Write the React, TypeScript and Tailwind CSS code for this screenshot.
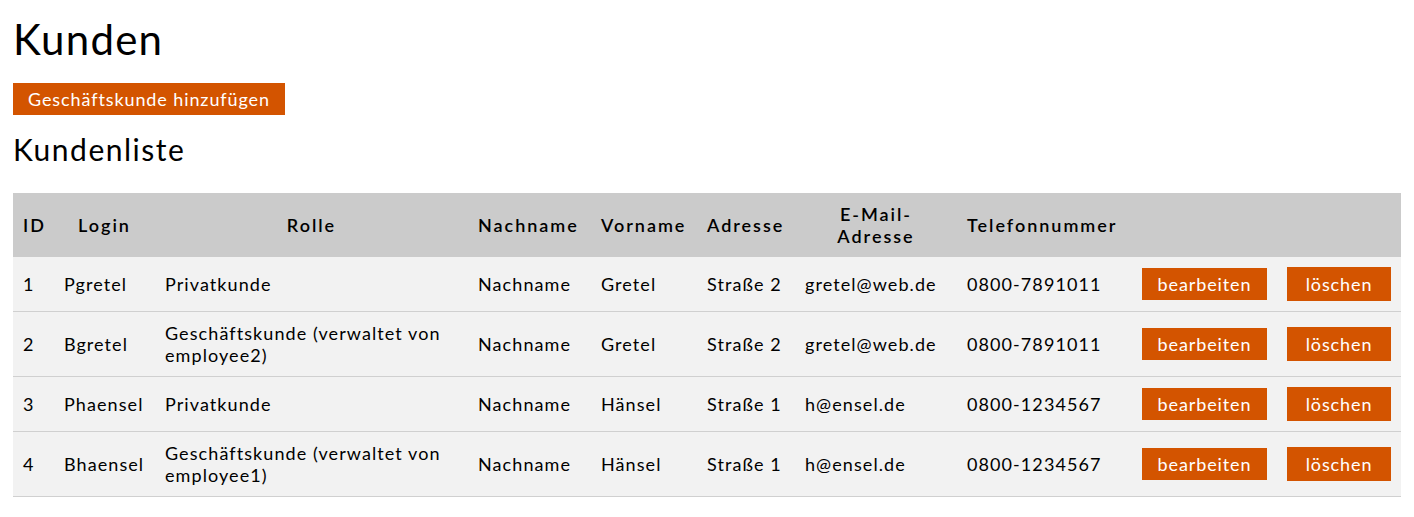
import React from "react";

const rows = [
  { id: "1", login: "Pgretel", rolle: "Privatkunde", nach: "Nachname", vor: "Gretel", adr: "Straße 2", mail: "gretel@web.de", tel: "0800-7891011" },
  { id: "2", login: "Bgretel", rolle: "Geschäftskunde (verwaltet von employee2)", nach: "Nachname", vor: "Gretel", adr: "Straße 2", mail: "gretel@web.de", tel: "0800-7891011" },
  { id: "3", login: "Phaensel", rolle: "Privatkunde", nach: "Nachname", vor: "Hänsel", adr: "Straße 1", mail: "h@ensel.de", tel: "0800-1234567" },
  { id: "4", login: "Bhaensel", rolle: "Geschäftskunde (verwaltet von employee1)", nach: "Nachname", vor: "Hänsel", adr: "Straße 1", mail: "h@ensel.de", tel: "0800-1234567" },
];

export default function App() {
  return (
    <div className="min-h-[517px] bg-white px-[13px] text-black" style={{ fontFamily: "Lato, 'Noto Sans', sans-serif" }}>
      <h1 className="pt-[14px] text-[42px] leading-[50px] font-normal tracking-[0.03em]">Kunden</h1>
      <button className="mt-[19px] block h-[32px] bg-[#d35400] px-[15px] text-[18px] leading-[32px] tracking-[0.05em] text-white">
        Geschäftskunde hinzufügen
      </button>
      <h2 className="mt-[16px] text-[30px] leading-[36px] font-normal tracking-[0.05em]">Kundenliste</h2>
      <table className="mt-[26px] w-[1388px] table-fixed border-collapse text-[18px] leading-[22px] tracking-[0.06em]">
        <colgroup>
          <col className="w-[41px]" />
          <col className="w-[101px]" />
          <col className="w-[313px]" />
          <col className="w-[123px]" />
          <col className="w-[106px]" />
          <col className="w-[98px]" />
          <col className="w-[162px]" />
          <col className="w-[175px]" />
          <col className="w-[145px]" />
          <col className="w-[124px]" />
        </colgroup>
        <thead>
          <tr className="bg-[#cbcbcb]">
            {["ID", "Login", "Rolle", "Nachname", "Vorname", "Adresse", "E-Mail-Adresse", "Telefonnummer", "", ""].map((h, i) => (
              <th key={i} className={`px-[10px] py-[10px] font-semibold tracking-[0.11em] whitespace-nowrap ${i === 0 || i === 3 || i === 4 || i === 5 || i === 7 ? "text-left" : "text-center"}`}>
                {h === "E-Mail-Adresse" ? (
                  <>
                    E-Mail-
                    <br />
                    Adresse
                  </>
                ) : (
                  h
                )}
              </th>
            ))}
          </tr>
        </thead>
        <tbody>
          {rows.map((r) => (
            <tr key={r.id} className="border-b border-[#d0d0d0] bg-[#f2f2f2]">
              <td className="px-[10px] py-[10px] align-middle">{r.id}</td>
              <td className="px-[10px] py-[10px] align-middle">{r.login}</td>
              <td className="px-[10px] py-[10px] align-middle">{r.rolle}</td>
              <td className="px-[10px] py-[10px] align-middle">{r.nach}</td>
              <td className="px-[10px] py-[10px] align-middle">{r.vor}</td>
              <td className="px-[10px] py-[10px] align-middle">{r.adr}</td>
              <td className="px-[10px] py-[10px] align-middle">{r.mail}</td>
              <td className="px-[10px] py-[10px] align-middle">{r.tel}</td>
              <td className="px-[10px] py-[10px] align-middle">
                <button className="h-[32px] w-[125px] bg-[#d35400] text-[18px] leading-[32px] tracking-[0.05em] text-white">bearbeiten</button>
              </td>
              <td className="px-[10px] py-[10px] align-middle">
                <button className="h-[34px] w-[104px] bg-[#d35400] text-[18px] leading-[34px] tracking-[0.05em] text-white">löschen</button>
              </td>
            </tr>
          ))}
        </tbody>
      </table>
    </div>
  );
}
